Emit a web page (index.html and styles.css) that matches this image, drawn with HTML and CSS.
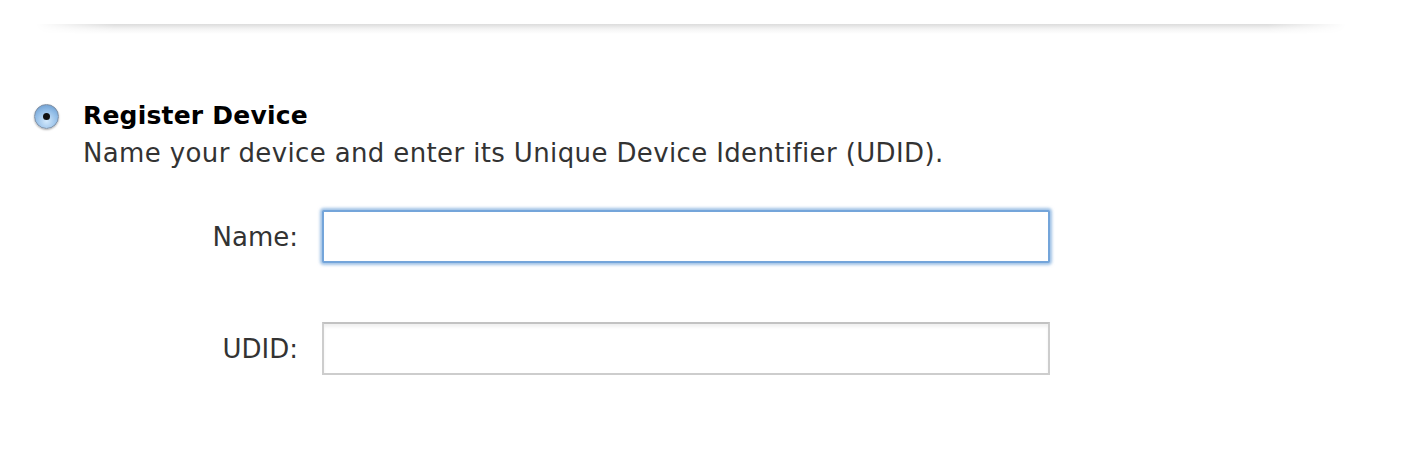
FILE: index.html
```html
<!DOCTYPE html>
<html lang="en">
<head>
    <meta charset="UTF-8">
    <title>Register Device</title>
    <link rel="stylesheet" href="styles.css">
</head>
<body>
    <div class="divider"></div>

    <div class="option">
        <span class="radio checked"></span>
        <div class="option-text">
            <h2>Register Device</h2>
            <p>Name your device and enter its Unique Device Identifier (UDID).</p>
        </div>
    </div>

    <div class="fields">
        <div class="field">
            <label for="name">Name:</label>
            <input type="text" id="name" class="focused">
        </div>
        <div class="field">
            <label for="udid">UDID:</label>
            <input type="text" id="udid">
        </div>
    </div>
</body>
</html>
```

FILE: styles.css
```css
body {
    margin: 0;
    font-family: "DejaVu Sans", "Liberation Sans", sans-serif;
    background: #fff;
    color: #000;
}
.divider {
    height: 10px;
    margin: 24px 66px 0 36px;
    background: linear-gradient(to bottom, #dcdcdc, #f4f4f4 50%, #fff);
    -webkit-mask-image: linear-gradient(to right, transparent, #000 6%, #000 94%, transparent);
    mask-image: linear-gradient(to right, transparent, #000 6%, #000 94%, transparent);
}
.option {
    display: flex;
    align-items: flex-start;
    margin-top: 66px;
    padding-left: 34px;
}
.radio {
    width: 23px;
    height: 23px;
    margin-top: 4px;
    margin-right: 24px;
    border-radius: 50%;
    border: 1px solid #7d8ea3;
    background: radial-gradient(circle at 50% 70%, #d3e9fc, #92bde7 55%, #5f92c8);
    box-shadow: 0 1px 2px rgba(0, 0, 0, 0.3);
    position: relative;
    flex: none;
}
.radio.checked::after {
    content: "";
    position: absolute;
    left: 8px;
    top: 8px;
    width: 7px;
    height: 7px;
    border-radius: 50%;
    background: #111;
}
.option-text h2 {
    margin: 0;
    font-size: 25px;
    font-weight: bold;
    letter-spacing: 0.2px;
    line-height: 32px;
}
.option-text p {
    margin: 4px 0 0;
    font-size: 26px;
    letter-spacing: 0.37px;
    line-height: 34px;
    color: #333;
}
.fields {
    margin-top: 40px;
}
.field {
    display: flex;
    align-items: center;
    height: 53px;
    margin-bottom: 59px;
}
.field label {
    width: 322px;
    padding-right: 24px;
    text-align: right;
    font-size: 26px;
    color: #333;
    box-sizing: border-box;
}
.field input {
    width: 728px;
    height: 53px;
    margin: 0;
    box-sizing: border-box;
    border: 2px solid #cdcdcd;
    border-top-color: #c2c2c2;
    box-shadow: inset 0 3px 3px rgba(0, 0, 0, 0.06);
    background: #fff;
    font: inherit;
    outline: none;
}
.field input.focused {
    border: 2px solid #74a5da;
    box-shadow: 0 0 3px 2px rgba(120, 168, 220, 0.7);
    border-radius: 2px;
}
```
